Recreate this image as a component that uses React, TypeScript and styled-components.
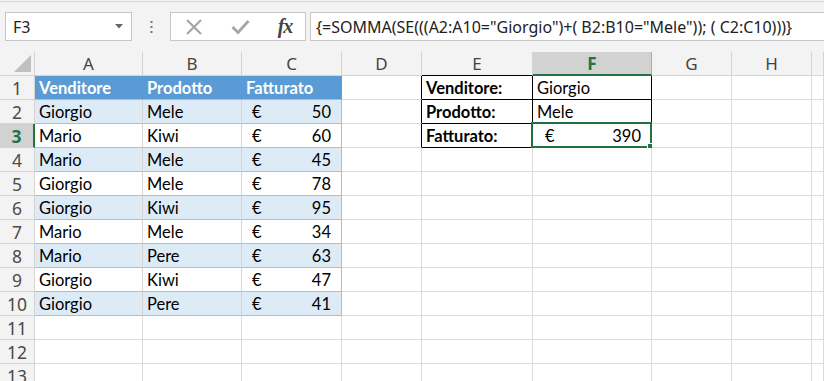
import React from "react";
import styled, { createGlobalStyle } from "styled-components";

const Global = createGlobalStyle`
  html, body { margin: 0; padding: 0; background: #f3f3f3; }
  #root { width: 824px; height: 381px; overflow: hidden; }
`;

const Frame = styled.div`
  width: 824px;
  height: 381px;
  overflow: hidden;
  padding-top: 1px;
  box-sizing: border-box;
  background: #f3f3f3;
  font-family: Lato, "Open Sans", sans-serif;
`;

const Toolbar = styled.div`
  height: 51px;
  box-sizing: border-box;
  border-top: 1px solid #d6d6d6;
  padding: 10px 0 0 5px;
  display: flex;
  align-items: flex-start;
`;

const NameBox = styled.div`
  width: 127px;
  height: 29px;
  box-sizing: border-box;
  border: 1px solid #c6c6c6;
  background: #fff;
  display: flex;
  align-items: center;
  justify-content: space-between;
  padding: 0 8px 0 7px;
  font-family: "Noto Sans", "Open Sans", sans-serif;
  font-size: 16px;
  color: #222;
`;

const Dots = styled.div`
  width: 38px;
  height: 29px;
  display: flex;
  align-items: center;
  justify-content: center;
`;

const FxBox = styled.div`
  width: 136px;
  height: 29px;
  box-sizing: border-box;
  border: 1px solid #c6c6c6;
  background: #fff;
  display: grid;
  grid-template-columns: 46px 46px 44px;
  align-items: center;
  justify-items: center;
`;

const FxText = styled.span`
  font-family: "Liberation Serif", "DejaVu Serif", serif;
  font-style: italic;
  font-weight: bold;
  font-size: 20px;
  color: #444;
  letter-spacing: -1px;
`;

const FormulaInput = styled.div`
  flex: 1;
  margin-left: 4px;
  height: 29px;
  box-sizing: border-box;
  border: 1px solid #c6c6c6;
  border-right: none;
  background: #fff;
  display: flex;
  align-items: center;
  padding-left: 5px;
  font-family: "Noto Sans", "Open Sans", sans-serif;
  font-size: 16px;
  color: #222;
  white-space: nowrap;
`;

const Sheet = styled.div`
  display: grid;
  grid-template-columns: 35px 108px 99px 100px 80px 111px 119px 80px 80px 1fr;
  grid-auto-rows: 24px;
  background: #fff;
`;

const Corner = styled.div`
  background: #f3f3f3;
  border-right: 1px solid #d4d4d4;
  border-bottom: 1px solid #d4d4d4;
  display: flex;
  align-items: flex-end;
  justify-content: flex-end;
  padding: 0 3px 3px 0;
`;

const ColHead = styled.div<{ $sel?: boolean; $bottom?: string }>`
  background: ${(p) => (p.$sel ? "#d2d2d2" : "#f3f3f3")};
  border-right: 1px solid ${(p) => (p.$sel ? "#ababab" : "#d4d4d4")};
  border-bottom: ${(p) => (p.$sel ? "2px solid #217346" : `1px solid ${p.$bottom || "#d4d4d4"}`)};
  display: flex;
  align-items: center;
  justify-content: center;
  font-family: "Noto Sans", "Open Sans", sans-serif;
  font-size: 17px;
  font-weight: ${(p) => (p.$sel ? 700 : 400)};
  color: ${(p) => (p.$sel ? "#217346" : "#444")};
`;

const RowHead = styled.div<{ $sel?: boolean }>`
  background: ${(p) => (p.$sel ? "#d2d2d2" : "#f3f3f3")};
  border-right: ${(p) => (p.$sel ? "2px solid #217346" : "1px solid #d4d4d4")};
  border-bottom: 1px solid #d4d4d4;
  display: flex;
  align-items: center;
  justify-content: center;
  font-family: "Noto Sans", "Open Sans", sans-serif;
  font-size: 17.5px;
  font-weight: ${(p) => (p.$sel ? 700 : 400)};
  color: ${(p) => (p.$sel ? "#217346" : "#4a4a4a")};
`;

const Cell = styled.div<{
  $bg?: string;
  $right?: string;
  $bottom?: string;
  $bold?: boolean;
  $color?: string;
}>`
  position: relative;
  display: flex;
  align-items: center;
  padding: 1px 4px 0 4px;
  background: ${(p) => p.$bg || "#fff"};
  border-right: 1px solid ${(p) => p.$right || "#dadada"};
  border-bottom: 1px solid ${(p) => p.$bottom || "#dadada"};
  font-family: Lato, "Open Sans", sans-serif;
  font-size: 16.5px;
  font-weight: ${(p) => (p.$bold ? 700 : 400)};
  color: ${(p) => p.$color || "#000"};
  white-space: nowrap;
  min-width: 0;
`;

const Money = styled.div<{ $left: number }>`
  flex: 1;
  display: flex;
  justify-content: space-between;
  padding: 0 6px 0 ${(p) => p.$left}px;
`;

const Selection = styled.div`
  position: absolute;
  left: -2px;
  top: -2px;
  right: -1px;
  bottom: -1px;
  border: 2px solid #217346;
  pointer-events: none;
`;

const Handle = styled.div`
  position: absolute;
  right: -4px;
  bottom: -4px;
  width: 5px;
  height: 5px;
  background: #217346;
  border: 1px solid #fff;
`;

const data: [string, string, number][] = [
  ["Giorgio", "Mele", 50],
  ["Mario", "Kiwi", 60],
  ["Mario", "Mele", 45],
  ["Giorgio", "Mele", 78],
  ["Giorgio", "Kiwi", 95],
  ["Mario", "Mele", 34],
  ["Mario", "Pere", 63],
  ["Giorgio", "Kiwi", 47],
  ["Giorgio", "Pere", 41],
];

const cols = ["A", "B", "C", "D", "E", "F", "G", "H", ""];

const summary: [string, string][] = [
  ["Venditore:", "Giorgio"],
  ["Prodotto:", "Mele"],
  ["Fatturato:", ""],
];

function renderCell(r: number, c: number) {
  const key = `${r}-${c}`;
  if (r <= 10 && c <= 2) {
    if (r === 1) {
      const labels = ["Venditore", "Prodotto", "Fatturato"];
      return (
        <Cell key={key} $bg="#5b9bd5" $right="#5b9bd5" $bottom="#9bc2e6" $bold $color="#fff">
          {labels[c]}
        </Cell>
      );
    }
    const row = data[r - 2];
    const bg = r % 2 === 0 ? "#ddebf7" : "#fff";
    const right = c === 2 ? "#9bc2e6" : "#d4d4d4";
    if (c === 2) {
      return (
        <Cell key={key} $bg={bg} $right={right} $bottom="#9bc2e6">
          <Money $left={6}>
            <span>€</span>
            <span>{row[2]}</span>
          </Money>
        </Cell>
      );
    }
    return (
      <Cell key={key} $bg={bg} $right={right} $bottom="#9bc2e6">
        {row[c]}
      </Cell>
    );
  }
  if (r <= 3 && c === 3) {
    return <Cell key={key} $right="#000" />;
  }
  if (r <= 3 && c === 4) {
    return (
      <Cell key={key} $right="#000" $bottom="#000" $bold>
        {summary[r - 1][0]}
      </Cell>
    );
  }
  if (r <= 3 && c === 5) {
    if (r === 3) {
      return (
        <Cell key={key} $right="#000" $bottom="#000">
          <Money $left={8}>
            <span>€</span>
            <span>390</span>
          </Money>
          <Selection>
            <Handle />
          </Selection>
        </Cell>
      );
    }
    return (
      <Cell key={key} $right="#000" $bottom="#000">
        {summary[r - 1][1]}
      </Cell>
    );
  }
  return <Cell key={key} />;
}

export default function App() {
  const rows = Array.from({ length: 13 }, (_, i) => i + 1);
  return (
    <Frame>
      <Global />
      <Toolbar>
        <NameBox>
          <span>F3</span>
          <svg width="8" height="5" viewBox="0 0 8 5">
            <polygon points="0,0 8,0 4,4.5" fill="#666" />
          </svg>
        </NameBox>
        <Dots>
          <svg width="3" height="12" viewBox="0 0 3 12">
            <rect x="0.5" y="0" width="2" height="2" fill="#777" />
            <rect x="0.5" y="5" width="2" height="2" fill="#777" />
            <rect x="0.5" y="10" width="2" height="2" fill="#777" />
          </svg>
        </Dots>
        <FxBox>
          <svg width="18" height="18" viewBox="0 0 18 18">
            <path d="M2 2 L16 16 M16 2 L2 16" stroke="#a6a6a6" strokeWidth="2.2" fill="none" />
          </svg>
          <svg width="19" height="16" viewBox="0 0 19 16">
            <path d="M1.5 8 L7 13.5 L17.5 2" stroke="#a6a6a6" strokeWidth="2.8" fill="none" />
          </svg>
          <FxText>fx</FxText>
        </FxBox>
        <FormulaInput>{'{=SOMMA(SE(((A2:A10="Giorgio")+( B2:B10="Mele")); ( C2:C10)))}'}</FormulaInput>
      </Toolbar>
      <Sheet>
        <Corner>
          <svg width="17" height="17" viewBox="0 0 17 17">
            <polygon points="17,0 17,17 0,17" fill="#c0c0c0" />
          </svg>
        </Corner>
        {cols.map((c, i) => (
          <ColHead key={c + i} $sel={c === "F"} $bottom={c === "E" ? "#000" : undefined}>
            {c}
          </ColHead>
        ))}
        {rows.map((r) => (
          <React.Fragment key={r}>
            <RowHead $sel={r === 3}>{r}</RowHead>
            {cols.map((_, c) => renderCell(r, c))}
          </React.Fragment>
        ))}
      </Sheet>
    </Frame>
  );
}
